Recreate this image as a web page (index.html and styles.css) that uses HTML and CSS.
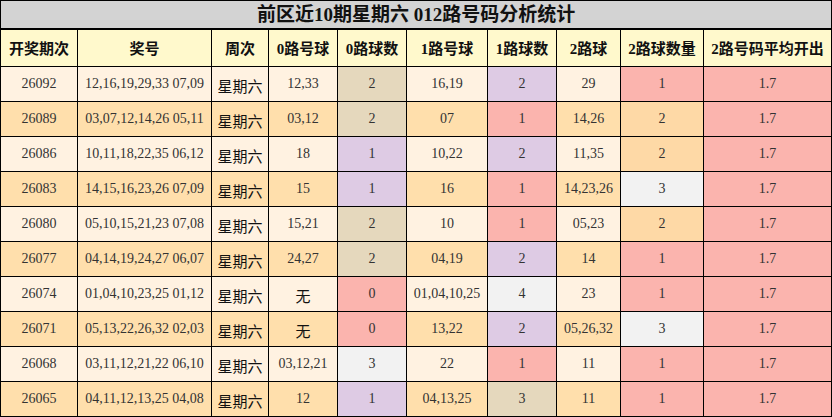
FILE: index.html
```html
<!DOCTYPE html>
<html lang="zh">
<head>
<meta charset="utf-8">
<link rel="stylesheet" href="styles.css">
</head>
<body>
<table class="stat">
  <colgroup>
    <col class="c1"><col class="c2"><col class="c3"><col class="c4"><col class="c5">
    <col class="c6"><col class="c7"><col class="c8"><col class="c9"><col class="c10">
  </colgroup>
  <thead>
    <tr class="title-row"><th colspan="10">前区近10期星期六 012路号码分析统计</th></tr>
    <tr class="head-row">
      <th>开奖期次</th><th>奖号</th><th>周次</th><th>0路号球</th><th>0路球数</th>
      <th>1路号球</th><th>1路球数</th><th>2路球</th><th>2路球数量</th><th>2路号码平均开出</th>
    </tr>
  </thead>
  <tbody>
    <tr class="odd"><td>26092</td><td>12,16,19,29,33 07,09</td><td class="wk">星期六</td><td>12,33</td><td class="beige">2</td><td>16,19</td><td class="lav">2</td><td>29</td><td class="pink">1</td><td class="pink">1.7</td></tr>
    <tr class="even"><td>26089</td><td>03,07,12,14,26 05,11</td><td class="wk">星期六</td><td>03,12</td><td class="beige">2</td><td>07</td><td class="pink">1</td><td>14,26</td><td class="orange">2</td><td class="pink">1.7</td></tr>
    <tr class="odd"><td>26086</td><td>10,11,18,22,35 06,12</td><td class="wk">星期六</td><td>18</td><td class="lav">1</td><td>10,22</td><td class="lav">2</td><td>11,35</td><td class="orange">2</td><td class="pink">1.7</td></tr>
    <tr class="even"><td>26083</td><td>14,15,16,23,26 07,09</td><td class="wk">星期六</td><td>15</td><td class="lav">1</td><td>16</td><td class="pink">1</td><td>14,23,26</td><td class="gray">3</td><td class="pink">1.7</td></tr>
    <tr class="odd"><td>26080</td><td>05,10,15,21,23 07,08</td><td class="wk">星期六</td><td>15,21</td><td class="beige">2</td><td>10</td><td class="pink">1</td><td>05,23</td><td class="orange">2</td><td class="pink">1.7</td></tr>
    <tr class="even"><td>26077</td><td>04,14,19,24,27 06,07</td><td class="wk">星期六</td><td>24,27</td><td class="beige">2</td><td>04,19</td><td class="lav">2</td><td>14</td><td class="pink">1</td><td class="pink">1.7</td></tr>
    <tr class="odd"><td>26074</td><td>01,04,10,23,25 01,12</td><td class="wk">星期六</td><td class="cj">无</td><td class="pink">0</td><td>01,04,10,25</td><td class="gray">4</td><td>23</td><td class="pink">1</td><td class="pink">1.7</td></tr>
    <tr class="even"><td>26071</td><td>05,13,22,26,32 02,03</td><td class="wk">星期六</td><td class="cj">无</td><td class="pink">0</td><td>13,22</td><td class="lav">2</td><td>05,26,32</td><td class="gray">3</td><td class="pink">1.7</td></tr>
    <tr class="odd"><td>26068</td><td>03,11,12,21,22 06,10</td><td class="wk">星期六</td><td>03,12,21</td><td class="gray">3</td><td>22</td><td class="pink">1</td><td>11</td><td class="pink">1</td><td class="pink">1.7</td></tr>
    <tr class="even"><td>26065</td><td>04,11,12,13,25 04,08</td><td class="wk">星期六</td><td>12</td><td class="lav">1</td><td>04,13,25</td><td class="beige">3</td><td>11</td><td class="pink">1</td><td class="pink">1.7</td></tr>
  </tbody>
</table>
</body>
</html>
```
FILE: styles.css
```css
html, body {
  margin: 0;
  padding: 0;
  background: #ffffff;
}

.stat {
  border-collapse: collapse;
  table-layout: fixed;
  width: 831px;
  font-family: "Liberation Serif", "Noto Sans CJK SC", serif;
  color: #333333;
}

.c1 { width: 77px; }
.c2 { width: 134px; }
.c3 { width: 57px; }
.c4 { width: 69px; }
.c5 { width: 69px; }
.c6 { width: 81px; }
.c7 { width: 69px; }
.c8 { width: 64px; }
.c9 { width: 83px; }
.c10 { width: 128px; }

.stat th,
.stat td {
  border: 1px solid #000000;
  text-align: center;
  padding: 0;
  overflow: hidden;
  white-space: nowrap;
}

.title-row th {
  height: 27px;
  background: #d3d3d3;
  color: #111111;
  font-size: 19px;
  font-weight: bold;
  border-bottom: 2px solid #000000;
  line-height: 27px;
}

.head-row th {
  height: 34px;
  background: #fff9cc;
  color: #111111;
  font-size: 15px;
  line-height: 20px;
  font-weight: bold;
  padding-top: 2px;
}

.stat td {
  height: 34px;
  font-size: 14px;
  line-height: 18px;
}

.odd td { background: #fff2e1; }
.even td { background: #ffdfac; }

.stat td.wk,
.stat td.cj {
  font-family: "Noto Sans CJK SC", sans-serif;
  font-size: 15px;
  line-height: 22px;
  color: #111111;
  height: 31px;
  padding-top: 3px;
}

.stat td.pink { background: #fbb4ae; }
.stat td.lav { background: #decbe4; }
.stat td.beige { background: #e5d8bd; }
.stat td.gray { background: #f2f2f2; }
.stat td.orange { background: #fed9a6; }
```
